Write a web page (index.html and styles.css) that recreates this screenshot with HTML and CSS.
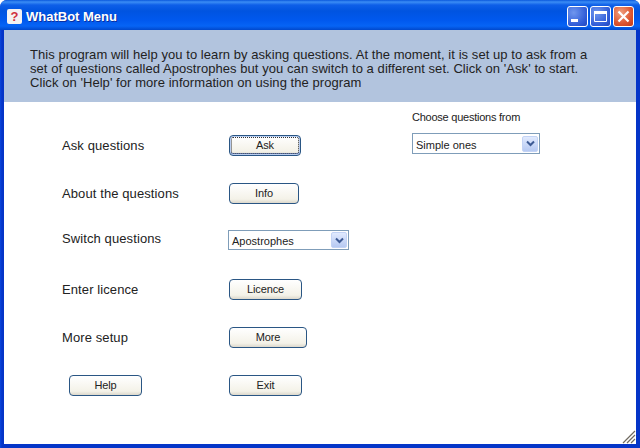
FILE: index.html
```html
<!DOCTYPE html>
<html lang="en">
<head>
<meta charset="utf-8">
<title>WhatBot Menu</title>
<link rel="stylesheet" href="styles.css">
</head>
<body>
<div class="window">
  <header class="titlebar">
    <span class="app-icon">?</span>
    <span class="title">WhatBot Menu</span>
    <div class="controls">
      <span class="ctl"><svg width="21" height="21" viewBox="0 0 21 21"><rect x="4" y="13" width="7" height="3" fill="#fff"/></svg></span>
      <span class="ctl"><svg width="21" height="21" viewBox="0 0 21 21"><path d="M4.500 5.500h12v10h-12z" fill="none" stroke="#fff" stroke-width="1"/><rect x="4" y="5" width="13" height="3" fill="#fff"/></svg></span>
      <span class="ctl close"><svg width="21" height="21" viewBox="0 0 21 21"><path d="M5.500 5.500l10 10M15.500 5.500l-10 10" stroke="#fff" stroke-width="2.200" fill="none"/></svg></span>
    </div>
  </header>
  <div class="client">
    <p class="banner">This program will help you to learn by asking questions. At the moment, it is set up to ask from a<br>set of questions called Apostrophes but you can switch to a different set. Click on 'Ask' to start.<br>Click on 'Help' for more information on using the program</p>
    <main class="body">
      <div class="form">
        <div class="row"><span class="label">Ask questions</span><button class="btn focus w72">Ask</button></div>
        <div class="row"><span class="label">About the questions</span><button class="btn w70">Info</button></div>
        <div class="row"><span class="label raise">Switch questions</span><div class="select wide"><span class="value">Apostrophes</span><i class="arrow"><svg width="9" height="7" viewBox="0 0 9 7"><path d="M1 1.500l3.500 3.500 3.500-3.500" stroke="#3d5a94" stroke-width="2" fill="none"/></svg></i></div></div>
        <div class="row"><span class="label">Enter licence</span><button class="btn w73">Licence</button></div>
        <div class="row"><span class="label">More setup</span><button class="btn w78">More</button></div>
        <div class="row"><button class="btn w73 help">Help</button><button class="btn w73">Exit</button></div>
      </div>
      <aside class="side">
        <div class="side-label">Choose questions from</div>
        <div class="select narrow"><span class="value">Simple ones</span><i class="arrow"><svg width="9" height="7" viewBox="0 0 9 7"><path d="M1 1.500l3.500 3.500 3.500-3.500" stroke="#3d5a94" stroke-width="2" fill="none"/></svg></i></div>
      </aside>
      <svg class="grip" width="14" height="14" viewBox="0 0 14 14"><path d="M1 13L13 1M5 13l8-8M9 13l4-4" stroke="#6f6a60" stroke-width="1.200" fill="none"/></svg>
    </main>
  </div>
</div>
</body>
</html>
```
FILE: styles.css
```css
* { box-sizing: border-box; }
html, body { margin: 0; padding: 0; }
body { width: 640px; height: 448px; overflow: hidden; font-family: "Liberation Sans", Arial, sans-serif; color: #222; }
.window { width: 640px; height: 448px; display: flex; flex-direction: column; border-radius: 7px 7px 0 0; overflow: hidden; padding: 0 4px 4px; background: linear-gradient(90deg, #0a47dd, #0535c8 2px, #0535c8 638px); }
.titlebar { flex: none; height: 30px; margin: 0 -4px; padding: 2px 6px 0 7px; display: flex; align-items: center; color: #fff; background: linear-gradient(180deg, #0a58dc 0, #3b8df5 2px, #0e5fe8 5px, #0054e0 11px, #0058ee 20px, #0664f5 26px, #0048cc 30px); }
.app-icon { width: 15px; height: 15px; margin-right: 4px; border-radius: 2px; background: #f4f2f2; color: #d03040; font: 700 13px/15px "Liberation Sans", sans-serif; text-align: center; }
.title { flex: 1; padding-top: 1px; font: 700 13px/16px "Liberation Sans", sans-serif; text-shadow: 1px 1px 0 #0a2fa0; }
.controls { display: flex; gap: 2px; }
.ctl { width: 21px; height: 21px; border: 1px solid #fff; border-radius: 3px; background: radial-gradient(circle at 30% 30%, #6f96ee, #2e5ad6 70%, #2448bc); display: block; margin: 0; overflow: hidden; }
.ctl svg { display: block; margin: -1px; }
.close { background: radial-gradient(circle at 35% 30%, #f0a080, #dd5530 60%, #c03a18); }
.client { flex: 1; background: #fff; display: flex; flex-direction: column; min-height: 0; }
.banner { flex: none; height: 72px; margin: 0; padding: 18px 0 0 26px; background: #b2c4de; font-size: 13px; line-height: 14px; letter-spacing: .06px; white-space: nowrap; }
.body { flex: 1; position: relative; display: flex; padding: 7px 0 0 58px; }
.form { width: 350px; padding-top: 26px; }
.row { height: 48px; display: grid; grid-template-columns: 167px 1fr; align-items: start; }
.label { font-size: 13px; line-height: 20px; letter-spacing: .1px; margin-top: 1px; }
.raise { margin-top: -2px; }
.btn { display: block; height: 21px; padding: 0; border: 1px solid #2a5684; border-radius: 4px; background: linear-gradient(180deg, #fff, #f4f2e8 80%, #dcd8cc); font: 11px/17px "Liberation Sans", sans-serif; letter-spacing: -.1px; color: #222; text-align: center; }
.w70 { width: 70px; }
.w72 { width: 72px; }
.w73 { width: 73px; }
.w78 { width: 78px; }
.focus { box-shadow: inset 0 0 0 1px #b9cdf0, inset 0 -1px 0 1px #7d9ce0; outline: 1px dotted #333; outline-offset: -3px; }
.help { margin-left: 7px; }
.side { flex: none; }
.side-label { font-size: 11px; line-height: 14px; margin-top: 1px; letter-spacing: -.24px; }
.select { height: 21px; margin-top: 9px; border: 1px solid #7f9db9; background: #fff; display: flex; align-items: center; justify-content: space-between; padding: 1px 1px 1px 3px; font-size: 11px; }
.value { padding-top: 2px; }
.row .select { height: 20px; margin-top: -1px; margin-left: -1px; }
.wide { width: 121px; }
.narrow { width: 128px; }
.arrow { width: 16px; height: 16px; border-radius: 2px; background: linear-gradient(180deg, #e1eafe, #b6c9f2); border: 1px solid #c3d3f5; display: flex; align-items: center; justify-content: center; }
.grip { position: absolute; right: 0; bottom: 0; }
```
